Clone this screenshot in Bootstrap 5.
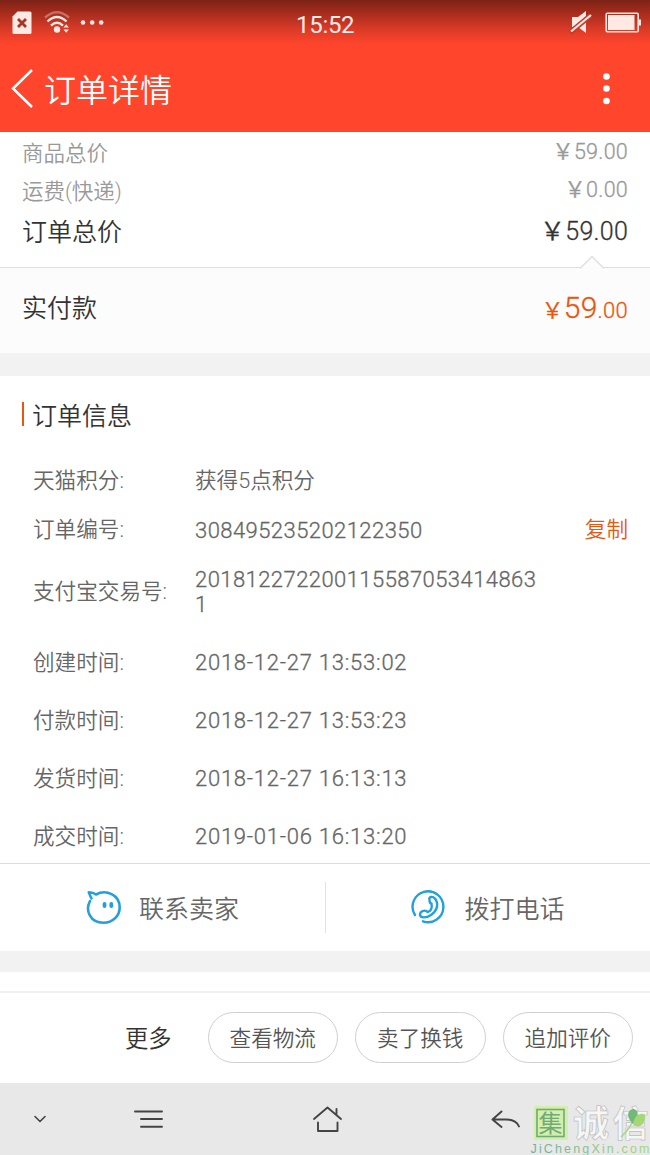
<!DOCTYPE html>
<html lang="zh-CN">
<head>
<meta charset="utf-8">
<meta name="viewport" content="width=device-width, initial-scale=1">
<title>订单详情</title>
<link rel="stylesheet" href="https://cdn.jsdelivr.net/npm/bootstrap@5.3.0/dist/css/bootstrap.min.css">
<style>
body{font-family:Roboto,"Noto Sans CJK SC",sans-serif;font-weight:350;color:#333;background:#fff;width:650px;height:1155px;overflow:hidden}
svg{display:block;flex:none}
.app-head{height:132px;background:linear-gradient(#7c2216 0,#a32b1c 12px,#d63a26 28px,#ff452c 44px);color:#fff}
.status-bar{height:46px;padding:0 9px 0 11px}
.clock{font-size:24px;line-height:28px;font-weight:400;letter-spacing:-.3px;left:296px;top:11px;color:#ffebe7}
.title-bar{height:86px;padding:0 38px 0 11px}
.title{font-size:32px;line-height:40px;margin-left:10px;padding-top:4px}
.sum-row{padding:0 22px;font-size:21.5px;color:#999}
.sum-main{font-size:25px;color:#333}
.num{letter-spacing:.25px;-webkit-text-stroke:.3px}
.paid{height:86px;border-top:1px solid #dfdfdf;background:#fcfcfc;padding:0 22px 3px;position:relative;font-size:25px}
.notch{right:46px;top:-13px}
.hot{color:#e8560f}
.gap-band{background:#f2f2f2}
.sec-title{height:76px;padding-left:22px;font-size:25px}
.sec-title i{width:2px;height:24px;background:#e8560f;margin-right:8px}
.sec-title span{padding-top:5px}
.info{padding:0 22px 0 33px;font-size:21.6px;color:#666}
.info .k{width:162px;flex:none;white-space:nowrap;padding-top:2px}
.info .v{width:345px;word-break:break-all;font-size:22px;line-height:25px;letter-spacing:.44px;-webkit-text-stroke:.3px}
.info .date{letter-spacing:.75px}
.info .cn{font-size:21.6px;letter-spacing:0;-webkit-text-stroke:0}
.contact{height:88px;border-top:1px solid #dcdcdc;font-size:25px;color:#666}
.contact span{margin-left:17px;padding-top:4px}
.contact-sep{width:1px;height:51px;background:#e2e2e2}
.actions{height:92px;border-top:2px solid #f0f0f0;padding:0 17px 2px 0;gap:17px}
.pill{width:130.500px;height:51px;border:1px solid #d0d0d0;color:#555;font-size:21.6px;font-weight:350;padding:5px 0 0}
.more{font-size:23.3px;margin-right:19px;padding-top:4px}
.sys-nav{height:72px;background:#e8e8e8;position:relative}
.wm{left:530px;top:22px;width:120px;height:50px;overflow:visible}
</style>
</head>
<body>
<header class="app-head">
  <div class="status-bar d-flex align-items-center justify-content-between position-relative">
    <svg width="96" height="26" viewBox="0 0 96 26" fill="#ffe9e4">
      <path d="M6.500 1.500H19a1.500 1.500 0 0 1 1.500 1.500V22.500a1.500 1.500 0 0 1-1.500 1.500H3a1.500 1.500 0 0 1-1.500-1.500V6.500z"/>
      <path d="M7 9l8 8M15 9l-8 8" stroke="#a83424" stroke-width="2.800"/>
      <g fill="none" stroke="#ffe9e4" stroke-width="2.400"><path d="M34 7.500Q46-3 58 7.500" opacity=".35"/><path d="M36.500 11.500Q46 2.500 55.500 11.500"/><path d="M40 15.600Q46 10 52 15.600"/></g>
      <circle cx="46" cy="19.500" r="3.200"/><path d="M52.500 17.500l2.700-3.200 2.700 3.200zM52.500 19.500l2.700 3.200 2.700-3.200z"/>
      <circle cx="72" cy="12.500" r="2.300"/><circle cx="81.200" cy="12.500" r="2.300"/><circle cx="90.200" cy="12.500" r="2.300"/>
    </svg>
    <div class="clock position-absolute">15:52</div>
    <svg width="74" height="26" viewBox="567 10 74 26" fill="#ffe9e4">
      <path d="M572 17h6l8-6v22l-8-6h-6z"/>
      <path d="M570 32.500L590.500 15.500" stroke="#c23a28" stroke-width="5"/>
      <path d="M571 31.500L591 15" stroke="#ffe9e4" stroke-width="2.200"/>
      <rect x="606.200" y="13.200" width="32" height="18.600" rx="1" fill="none" stroke="#ffe9e4" stroke-width="1.500"/>
      <rect x="608" y="15" width="26.500" height="15"/><path d="M639 19.500h2v6h-2z"/>
    </svg>
  </div>
  <div class="title-bar d-flex align-items-center">
    <svg width="23" height="42" viewBox="0 0 23 42" fill="none" stroke="#fff" stroke-width="2.500"><path d="M21 2L2 20.500 21 39"/></svg>
    <div class="title">订单详情</div>
    <svg class="ms-auto" width="12" height="36" viewBox="0 0 12 36" fill="#fff"><circle cx="6.500" cy="5.500" r="3.300"/><circle cx="6.500" cy="17.500" r="3.300"/><circle cx="6.500" cy="30" r="3.300"/></svg>
  </div>
</header>
<main>
  <div class="sum-row d-flex justify-content-between align-items-center" style="height:41px"><span class="pt-1">商品总价</span><span class="num">￥59.00</span></div>
  <div class="sum-row d-flex justify-content-between align-items-center" style="height:36px"><span style="padding-top:2px">运费(快递)</span><span class="num" style="padding-bottom:1px">￥0.00</span></div>
  <div class="sum-row sum-main d-flex justify-content-between align-items-start" style="height:58px;padding-top:4px"><span style="padding-top:1px">订单总价</span><span class="num">￥59.00</span></div>
  <div class="paid d-flex justify-content-between align-items-center">
    <svg class="notch position-absolute" width="24" height="14" viewBox="0 0 24 14"><path d="M0 13.500L12 1.500 24 13.500" fill="#fcfcfc" stroke="#dfdfdf" stroke-width="1.300"/></svg>
    <span>实付款</span><span class="hot num" style="font-size:22px;padding-bottom:3px">￥<span style="font-size:30px">59</span>.00</span>
  </div>
  <div class="gap-band" style="height:23px"></div>
  <section>
    <div class="sec-title d-flex align-items-center"><i></i><span>订单信息</span></div>
    <div class="info d-flex align-items-center" style="height:56px"><span class="k">天猫积分:</span><span class="v cn">获得5点积分</span></div>
    <div class="info d-flex align-items-center" style="height:43px"><span class="k">订单编号:</span><span class="v" style="padding-top:2px">308495235202122350</span><span class="hot ms-auto" style="padding-top:2px">复制</span></div>
    <div class="info d-flex align-items-center" style="height:80px"><span class="k">支付宝交易号:</span><span class="v" style="padding-top:2px">2018122722001155870534148631</span></div>
    <div class="info d-flex align-items-center" style="height:62px"><span class="k">创建时间:</span><span class="v date">2018-12-27 13:53:02</span></div>
    <div class="info d-flex align-items-center" style="height:54px"><span class="k">付款时间:</span><span class="v date">2018-12-27 13:53:23</span></div>
    <div class="info d-flex align-items-center" style="height:62px"><span class="k">发货时间:</span><span class="v date">2018-12-27 16:13:13</span></div>
    <div class="info d-flex align-items-center" style="height:54px"><span class="k">成交时间:</span><span class="v date">2019-01-06 16:13:20</span></div>
  </section>
  <div class="contact d-flex align-items-center">
    <div class="d-flex align-items-center justify-content-center" style="width:325px">
      <svg width="36" height="36" viewBox="86 889.500 36 36" fill="none" stroke="#229fdc" stroke-width="2.600" stroke-linecap="round" stroke-linejoin="round"><path d="M90 900.500C85 910 90 922.300 103.500 922.300C113 922.300 119.700 915 119.700 907C119.700 894 106 888.500 96 894C94 892.500 92 892 88.800 891.800C90 894 90 896 91.500 897.800"/><path d="M104.500 903.500v2M111.300 903.500v2" stroke-width="3.800"/></svg>
      <span>联系卖家</span>
    </div>
    <div class="contact-sep"></div>
    <div class="d-flex align-items-center justify-content-center" style="width:324px">
      <svg width="36" height="36" viewBox="410.500 889.500 36 36" fill="none" stroke="#229fdc" stroke-width="2.400" stroke-linecap="round" stroke-linejoin="round"><path d="M414.500 914.500A15.400 15.400 0 1 1 422.500 920.800"/><path d="M429 899.500C428 896 432 895.500 434.500 898C439 904 436 911 430.500 914.500C426 917.500 419.500 918 419.500 914C419.500 911 424.500 908.500 427 911.500C430 911 432 908 431 903C429.500 903 429 901 429 899.500Z"/></svg>
      <span>拨打电话</span>
    </div>
  </div>
  <div class="gap-band" style="height:21px"></div>
  <div style="height:19px"></div>
</main>
<div class="actions d-flex align-items-center justify-content-end">
  <span class="more">更多</span>
  <button class="btn rounded-pill pill">查看物流</button>
  <button class="btn rounded-pill pill">卖了换钱</button>
  <button class="btn rounded-pill pill">追加评价</button>
</div>
<nav class="sys-nav">
  <svg width="650" height="72" viewBox="0 1083 650 72" fill="none" stroke="#444" stroke-width="1.900" stroke-linecap="round" stroke-linejoin="round">
    <path d="M35 1116.500l5 5 5-5" stroke-width="1.600"/>
    <path d="M135 1111.500h27M141 1119h21M141 1126.700h21"/>
    <path d="M314 1119L327.500 1107.500 341 1119M336.500 1114.500V1109M318 1122.500V1131H337.500V1122.500"/>
    <path d="M501.500 1111.500L492.500 1119.500 501.500 1127M493 1119.500H506Q516 1119.500 519 1126.500"/>
  </svg>
  <svg class="wm position-absolute" viewBox="530 1105 120 50">
    <rect x="534" y="1106" width="34" height="34" fill="#d3efac"/>
    <rect x="537" y="1109.500" width="27" height="27" fill="none" stroke="#71a978" stroke-width="1.600"/>
    <text x="538.500" y="1132" font-size="24" font-weight="400" fill="#71a978">集</text>
    <g font-size="36" font-weight="700" fill="#f6f6f6" stroke="#bdbdbd" stroke-width=".7"><text x="573" y="1137">诚</text><text x="612.500" y="1137">信</text></g>
    <path d="M621 1137Q631 1128 635 1116" fill="none" stroke="#a8d77f" stroke-width="1.500"/>
    <path d="M633 1124C625 1116 628 1109 634 1109C640 1111 638 1117 633 1124Z" fill="#70b978"/>
    <path d="M633 1125C634 1114 642 1112 645 1115C646 1124 640 1129 633 1125Z" fill="#a5d875"/>
    <defs><linearGradient id="wg"><stop offset="0" stop-color="#70afa0"/><stop offset="1" stop-color="#a9d67c"/></linearGradient></defs>
    <text x="530.500" y="1152.500" font-family="Liberation Sans, sans-serif" font-size="12.500" font-weight="400" fill="url(#wg)" textLength="119" lengthAdjust="spacing">JiChengXin.com</text>
  </svg>
</nav>
<script src="https://cdn.jsdelivr.net/npm/bootstrap@5.3.0/dist/js/bootstrap.bundle.min.js"></script>
</body>
</html>
